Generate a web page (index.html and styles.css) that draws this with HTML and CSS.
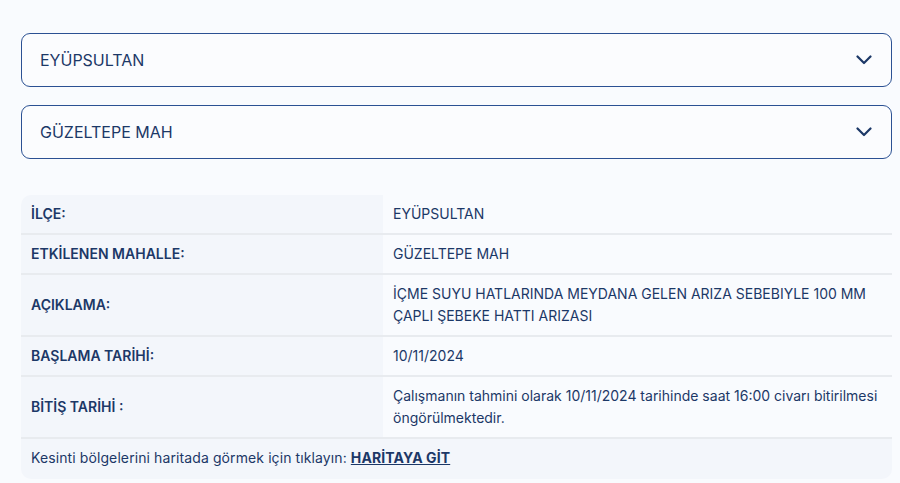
FILE: index.html
```html
<!DOCTYPE html>
<html lang="tr">
<head>
  <meta charset="UTF-8" />
  <meta name="viewport" content="width=device-width, initial-scale=1" />
  <title>Su Kesintileri</title>
  <link rel="stylesheet" href="styles.css">
</head>
<body>

<div class="wrap">
  <div class="select">
    <span>EYÜPSULTAN</span>
    <svg class="chev" width="16" height="10" viewBox="0 0 16 10"><path d="M1.5 1.5 L8 8 L14.5 1.5" fill="none" stroke="currentColor" stroke-width="2.2" stroke-linecap="round" stroke-linejoin="round"/></svg>
  </div>
  <div class="select">
    <span>GÜZELTEPE MAH</span>
    <svg class="chev" width="16" height="10" viewBox="0 0 16 10"><path d="M1.5 1.5 L8 8 L14.5 1.5" fill="none" stroke="currentColor" stroke-width="2.2" stroke-linecap="round" stroke-linejoin="round"/></svg>
  </div>

  <table class="info">
    <tr><th>İLÇE:</th><td>EYÜPSULTAN</td></tr>
    <tr><th>ETKİLENEN MAHALLE:</th><td>GÜZELTEPE MAH</td></tr>
    <tr><th>AÇIKLAMA:</th><td>İÇME SUYU HATLARINDA MEYDANA GELEN ARIZA SEBEBIYLE 100 MM ÇAPLI ŞEBEKE HATTI ARIZASI</td></tr>
    <tr><th>BAŞLAMA TARİHİ:</th><td>10/11/2024</td></tr>
    <tr><th>BİTİŞ TARİHİ :</th><td>Çalışmanın tahmini olarak 10/11/2024 tarihinde saat 16:00 civarı bitirilmesi öngörülmektedir.</td></tr>
    <tr class="foot"><td colspan="2">Kesinti bölgelerini haritada görmek için tıklayın: <a href="#">HARİTAYA GİT</a></td></tr>
  </table>
</div>

</body>
</html>
```

FILE: styles.css
```css
:root {
  --bg: #f9fbfe; --navy: #1c3867; --border: #2b5193;
  --cell: #f3f6fb; --line: #e8ebef;
}
body {
  background: var(--bg); color: var(--navy);
  font-family: Inter, "Noto Sans", sans-serif;
  margin: 0;
}
.wrap { padding: 33px 8px 0 21px; }
.select {
  display: flex; align-items: center; justify-content: space-between;
  height: 52px; border: 1px solid var(--border); border-radius: 9px;
  padding: 0 19px 0 18px; margin-bottom: 18px; font-size: 16px;
  background: #fbfcfe;
}
.chev { color: var(--navy); }
.info {
  width: 100%; border-collapse: collapse; margin-top: 36px;
  font-size: 14px; border-radius: 10px; overflow: hidden;
}
.info th, .info td {
  text-align: left; vertical-align: middle;
  padding: 8px 10px; line-height: 22px;
  border-bottom: 2px solid var(--line);
}
.info th { width: 342px; background: var(--cell); font-weight: 600; }
.info td { background: var(--bg); font-weight: 400; }
.info tr:last-child td { border-bottom: none; }
.info .foot td { background: var(--cell); padding: 8px 10px 10px; letter-spacing: 0.1px; }
.foot a { color: var(--navy); font-weight: 700; }
```
